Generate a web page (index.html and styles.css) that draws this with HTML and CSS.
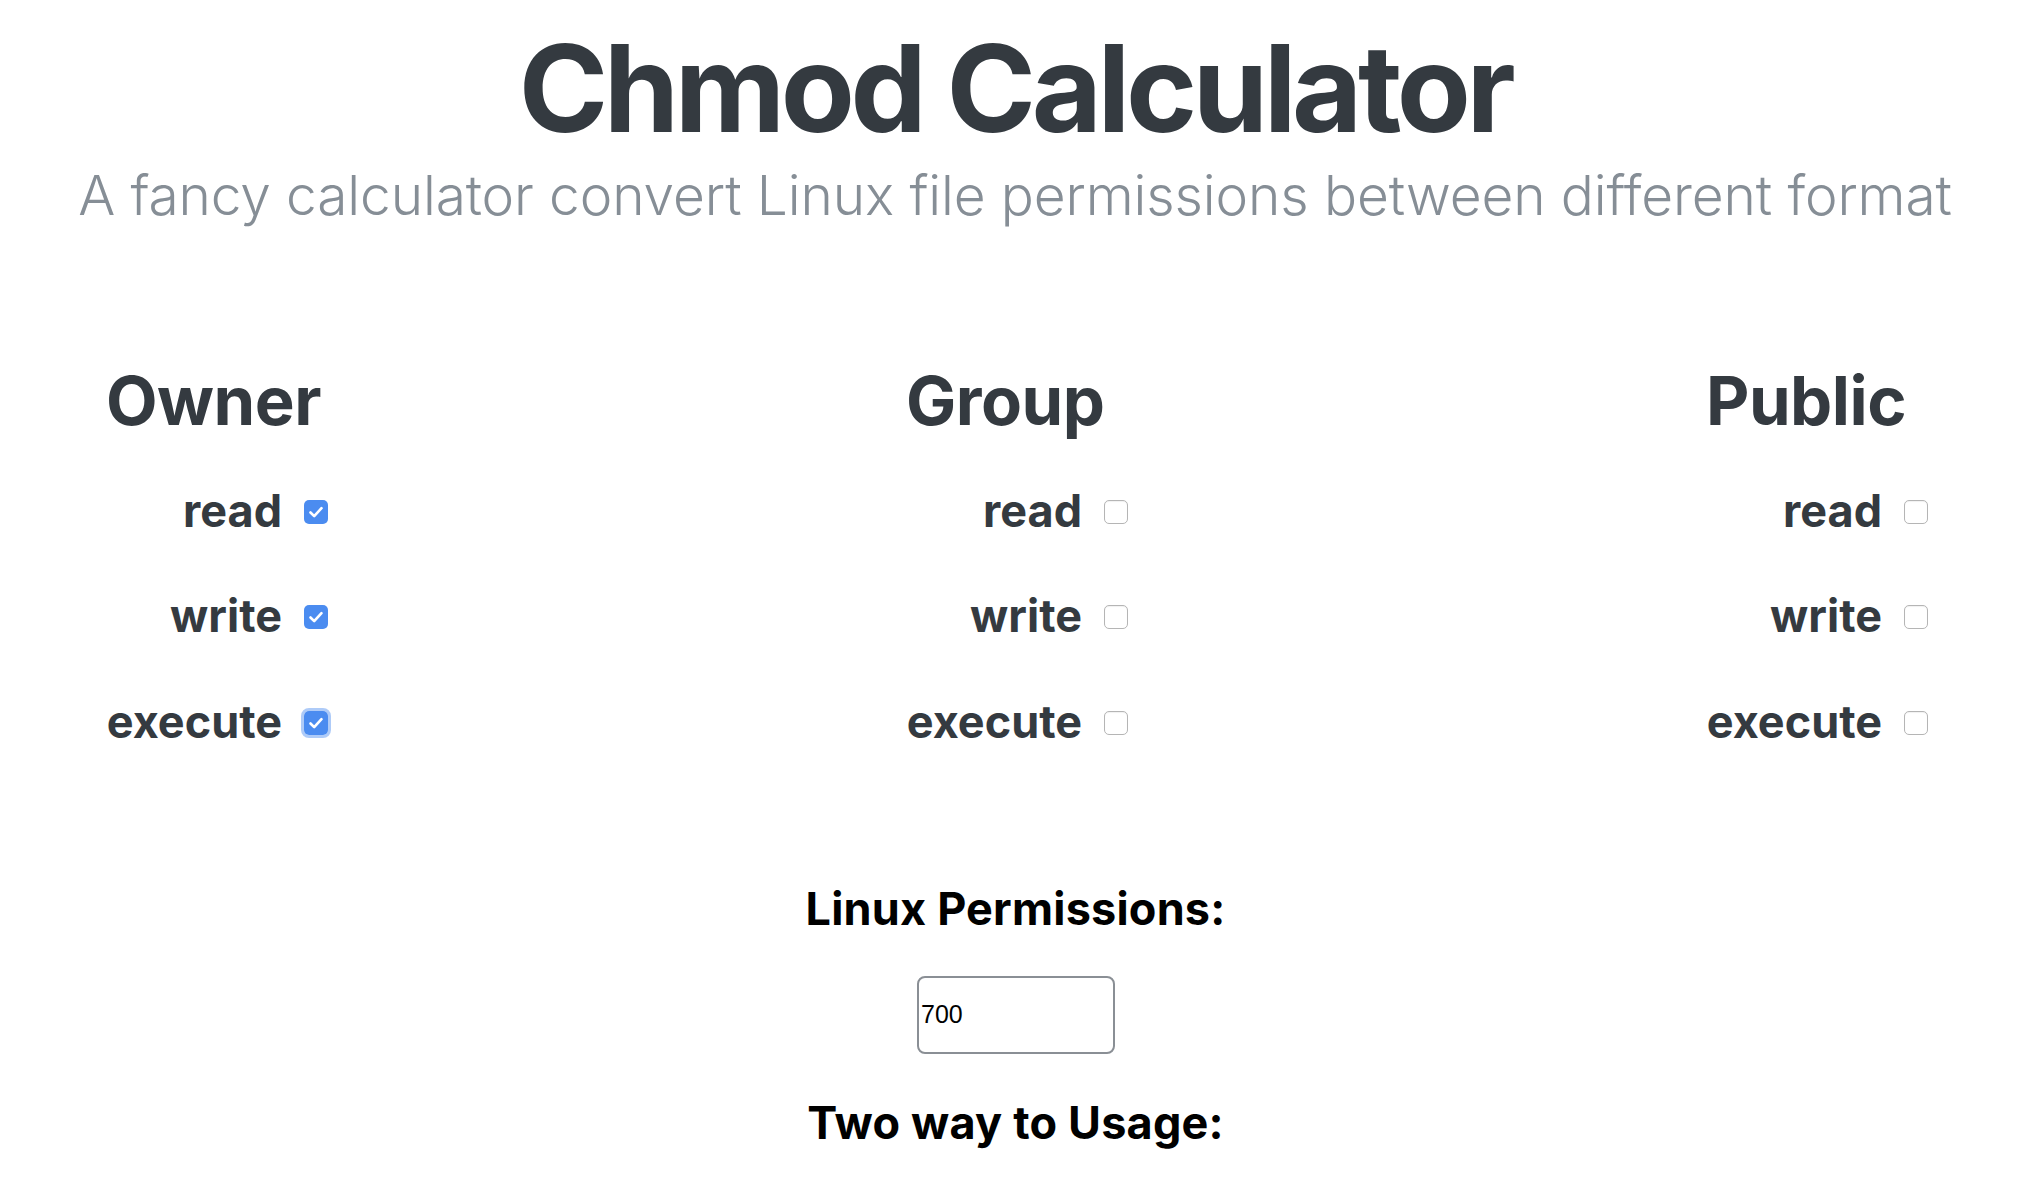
FILE: index.html
```html
<!DOCTYPE html>
<html lang="en">
<head>
<meta charset="utf-8">
<title>Chmod Calculator</title>
<link rel="stylesheet" href="styles.css">
</head>
<body>
<header class="hero">
  <h1 class="title">Chmod Calculator</h1>
  <p class="lead">A fancy calculator convert Linux file permissions between different format</p>
</header>

<section class="groups">
  <div class="col">
    <h2 class="col-title">Owner</h2>
    <label class="perm"><span class="perm-name">read</span><span class="box checked"><svg viewBox="0 0 24 24" class="tick"><path d="M6.5 12.5 L10.2 16.2 L17.5 8.2"/></svg></span></label>
    <label class="perm"><span class="perm-name">write</span><span class="box checked"><svg viewBox="0 0 24 24" class="tick"><path d="M6.5 12.5 L10.2 16.2 L17.5 8.2"/></svg></span></label>
    <label class="perm"><span class="perm-name">execute</span><span class="box checked focus"><svg viewBox="0 0 24 24" class="tick"><path d="M6.5 12.5 L10.2 16.2 L17.5 8.2"/></svg></span></label>
  </div>
  <div class="col">
    <h2 class="col-title">Group</h2>
    <label class="perm"><span class="perm-name">read</span><span class="box"></span></label>
    <label class="perm"><span class="perm-name">write</span><span class="box"></span></label>
    <label class="perm"><span class="perm-name">execute</span><span class="box"></span></label>
  </div>
  <div class="col">
    <h2 class="col-title">Public</h2>
    <label class="perm"><span class="perm-name">read</span><span class="box"></span></label>
    <label class="perm"><span class="perm-name">write</span><span class="box"></span></label>
    <label class="perm"><span class="perm-name">execute</span><span class="box"></span></label>
  </div>
</section>

<section class="result">
  <h3 class="result-title">Linux Permissions:</h3>
  <input class="octal" type="text" value="700">
  <h3 class="result-title usage">Two way to Usage:</h3>
</section>
</body>
</html>
```
FILE: styles.css
```css
html, body {
  margin: 0;
  padding: 0;
  background: #ffffff;
}

body {
  font-family: Inter, "Liberation Sans", sans-serif;
  color: #343a40;
  overflow: hidden;
}

.hero {
  text-align: center;
  padding-top: 16px;
  padding-left: 6px;
}

.title {
  margin: 0;
  font-size: 121px;
  line-height: 1.2;
  font-weight: 700;
  letter-spacing: -4.4px;
  color: #343a40;
}

.lead {
  margin: 1px 0 0;
  font-size: 55px;
  line-height: 1.2;
  font-weight: 300;
  letter-spacing: -0.12px;
  color: #868e96;
}

.groups {
  display: grid;
  grid-template-columns: repeat(3, 222px);
  column-gap: 578px;
  padding-left: 106px;
  margin-top: 133px;
}

.col {
  display: flex;
  flex-direction: column;
}

.col-title {
  margin: 0;
  font-size: 67px;
  line-height: 1.2;
  font-weight: 700;
  letter-spacing: -0.5px;
  white-space: nowrap;
}

.perm {
  display: flex;
  justify-content: flex-end;
  align-items: center;
  gap: 22px;
  height: 54px;
  margin-top: 51.5px;
  white-space: nowrap;
}

.col-title + .perm {
  margin-top: 42px;
}

.perm-name {
  font-size: 45px;
  line-height: 54px;
  font-weight: 700;
}

.box {
  flex: none;
  width: 24px;
  height: 24px;
  box-sizing: border-box;
  border-radius: 5px;
  border: 1px solid #b5b5b5;
  background: #ffffff;
  box-shadow: inset 0 1px 1px rgba(0, 0, 0, 0.06);
  display: flex;
  align-items: center;
  justify-content: center;
  margin-top: 2px;
}

.box.checked {
  border: none;
  background: #4b8cf0;
  box-shadow: none;
}

.box.focus {
  outline: 3px solid rgba(75, 140, 240, 0.45);
  outline-offset: 0;
}

.tick {
  width: 24px;
  height: 24px;
  fill: none;
  stroke: #ffffff;
  stroke-width: 2.6;
  stroke-linecap: round;
  stroke-linejoin: round;
}

.result {
  display: flex;
  flex-direction: column;
  align-items: center;
  margin-top: 133px;
  padding-left: 7px;
}

.result-title {
  margin: 0;
  font-size: 45px;
  line-height: 1.2;
  font-weight: 700;
  letter-spacing: 0.2px;
  color: #000000;
}

.octal {
  margin-top: 40px;
  width: 198px;
  height: 78px;
  box-sizing: border-box;
  border: 2.5px solid #8a8f95;
  border-radius: 8px;
  padding: 0 2.5px;
  font-family: "Liberation Sans", Arial, sans-serif;
  font-size: 25px;
  color: #000000;
  background: #ffffff;
}

.usage {
  margin-top: 42px;
}
```
